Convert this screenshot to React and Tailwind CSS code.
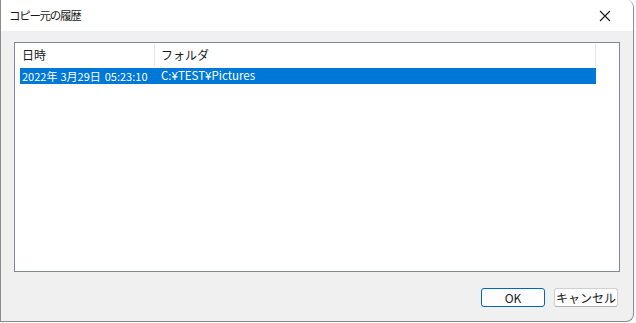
import React from "react";

const jp = { fontFamily: '"Noto Sans CJK JP", "Liberation Sans", sans-serif' };

function CloseIcon() {
  return (
    <svg width="12" height="12" viewBox="0 0 12 12" className="text-[#1a1a1a]">
      <path d="M1 1 L11 11 M11 1 L1 11" stroke="currentColor" strokeWidth="1.1" fill="none" />
    </svg>
  );
}

function Button({ children, primary = false }) {
  return (
    <button
      type="button"
      className={`w-[64px] h-[19px] rounded-[3px] bg-[#fdfdfd] text-[12px] leading-none text-[#1a1a1a] flex items-center justify-center ${
        primary ? "border border-[#0067c0]" : "border border-[#cfcfcf] border-b-[#b0b0b0]"
      }`}
      style={jp}
    >
      {children}
    </button>
  );
}

// 日付は「年」「月日」「時刻」に分けて間隔をあける
const rows = [{ date: ["2022年", "3月29日", "05:23:10"], folder: "C:¥TEST¥Pictures" }];

export default function App() {
  return (
    <div className="w-[636px] h-[323px] bg-[#fafafa] overflow-hidden" style={jp}>
      <div className="w-[634px] h-[322px] flex flex-col bg-[#f0f0f0] border-l border-r border-b border-[#8c8c8c] rounded-tr-[8px] rounded-br-[8px] overflow-hidden">
        {/* title bar */}
        <div className="h-[31px] bg-white flex items-center justify-between pl-[8px] pr-[22px] shrink-0">
          <span className="text-[11.5px] tracking-[-1.3px] text-[#1a1a1a]">コピー元の履歴</span>
          <CloseIcon />
        </div>

        {/* body */}
        <div className="flex-1 flex flex-col px-[13px] pt-[11px] pb-[14px]">
          <div className="h-[230px] border border-[#828790] bg-white pl-[5px] pr-[23px] pt-px flex flex-col">
            <div className="h-[22px] flex text-[12px] text-[#1a1a1a]">
              <div className="w-[135px] pl-[2px] flex items-center border-r border-[#e5e5e5]">日時</div>
              <div className="flex-1 pl-[6px] flex items-center border-r border-[#e5e5e5]">フォルダ</div>
            </div>
            <div className="mt-[2px]">
              {rows.map((r) => (
                <div key={r.folder} className="h-[16px] flex items-center bg-[#0078d7] text-white text-[11px]">
                  <div className="w-[136px] pl-[2px] flex whitespace-nowrap">
                    <span>{r.date[0]}</span>
                    <span className="ml-[3px]">{r.date[1]}</span>
                    <span className="ml-[4px]">{r.date[2]}</span>
                  </div>
                  <div className="pl-[5px] whitespace-nowrap text-[11.5px]">{r.folder}</div>
                </div>
              ))}
            </div>
          </div>

          <div className="mt-auto flex justify-end gap-[9px] pr-[2px]">
            <Button primary>OK</Button>
            <Button>キャンセル</Button>
          </div>
        </div>
      </div>
    </div>
  );
}
